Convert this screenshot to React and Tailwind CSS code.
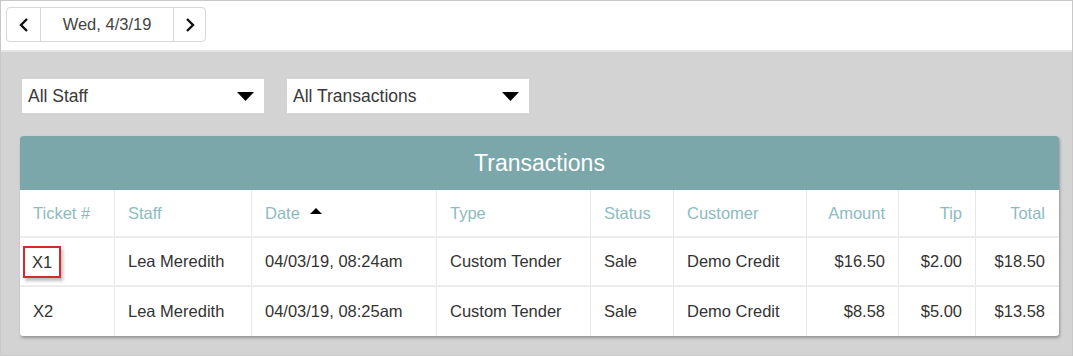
import React from "react";

const columns = [
  { key: "ticket", label: "Ticket #", width: "w-[94px]" },
  { key: "staff", label: "Staff", width: "w-[137px]" },
  { key: "date", label: "Date", width: "w-[185px]", sort: true },
  { key: "type", label: "Type", width: "w-[154px]" },
  { key: "status", label: "Status", width: "w-[83px]" },
  { key: "customer", label: "Customer", width: "w-[133px]" },
  { key: "amount", label: "Amount", width: "w-[92px]", right: true },
  { key: "tip", label: "Tip", width: "w-[77px]", right: true },
  { key: "total", label: "Total", width: "w-[83px]", right: true },
];

const rows = [
  {
    ticket: "X1",
    staff: "Lea Meredith",
    date: "04/03/19, 08:24am",
    type: "Custom Tender",
    status: "Sale",
    customer: "Demo Credit",
    amount: "$16.50",
    tip: "$2.00",
    total: "$18.50",
  },
  {
    ticket: "X2",
    staff: "Lea Meredith",
    date: "04/03/19, 08:25am",
    type: "Custom Tender",
    status: "Sale",
    customer: "Demo Credit",
    amount: "$8.58",
    tip: "$5.00",
    total: "$13.58",
  },
];

const Caret = () => (
  <svg width="17" height="9" viewBox="0 0 17 9" className="fill-black">
    <path d="M0 0 H17 L8.5 9 Z" />
  </svg>
);

const Select = ({ label }) => (
  <div className="w-[242px] h-[34px] bg-white flex items-center justify-between pl-[6px] pr-[10px] text-[17.5px] text-[#3a3a3a]">
    <span>{label}</span>
    <Caret />
  </div>
);

export default function App() {
  return (
    <div
      className="w-[1073px] h-[356px] border border-[#c8c8c8] bg-[#d3d3d3] flex flex-col overflow-hidden"
      style={{ fontFamily: '"Liberation Sans", Arial, sans-serif' }}
    >
      {/* top bar */}
      <div className="h-[51px] bg-white border-b-2 border-[#e4e4e4] flex items-start pt-[6px] pl-[5px]">
        <div className="flex h-[35px] border border-[#d8d8d8] rounded-[4px] bg-white">
          <button className="w-[34px] flex items-center justify-center border-r border-[#d8d8d8]">
            <svg width="10" height="14" viewBox="0 0 10 14" fill="none" stroke="#111" strokeWidth="2.4">
              <path d="M8 1 L2 7 L8 13" />
            </svg>
          </button>
          <div className="w-[132px] flex items-center justify-center text-[16.5px] text-[#444]">
            Wed, 4/3/19
          </div>
          <button className="w-[32px] flex items-center justify-center border-l border-[#d8d8d8]">
            <svg width="10" height="14" viewBox="0 0 10 14" fill="none" stroke="#111" strokeWidth="2.4">
              <path d="M2 1 L8 7 L2 13" />
            </svg>
          </button>
        </div>
      </div>

      {/* filters */}
      <div className="flex gap-[23px] pl-[21px] pt-[27px]">
        <Select label="All Staff" />
        <Select label="All Transactions" />
      </div>

      {/* table card */}
      <div className="ml-[19px] mt-[23px] w-[1039px] rounded-[3px] bg-white shadow-[1px_2px_3px_rgba(0,0,0,0.3)] overflow-hidden">
        <div className="h-[54px] bg-[#7ba7aa] flex items-center justify-center text-white text-[23px]">
          Transactions
        </div>
        <div className="flex h-[48px] border-b-2 border-[#ececec]">
          {columns.map((c, i) => (
            <div
              key={c.key}
              className={`${c.width} flex items-center px-[13px] text-[16.5px] text-[#8cbcbf] ${
                c.right ? "justify-end" : ""
              } ${i > 0 ? "border-l border-[#e8e8e8]" : ""}`}
            >
              {c.label}
              {c.sort && (
                <svg width="12" height="6" viewBox="0 0 12 6" className="ml-[10px] mb-[5px] fill-black">
                  <path d="M0 6 L6 0 L12 6 Z" />
                </svg>
              )}
            </div>
          ))}
        </div>
        {rows.map((r, ri) => (
          <div key={ri} className={`flex h-[49px] ${ri === 0 ? "border-b-2 border-[#ececec]" : ""}`}>
            {columns.map((c, i) => (
              <div
                key={c.key}
                className={`${c.width} flex items-center px-[13px] text-[16.5px] text-[#333] ${
                  c.right ? "justify-end" : ""
                } ${i > 0 ? "border-l border-[#e8e8e8]" : ""}`}
              >
                {c.key === "ticket" && ri === 0 ? (
                  <span className="-ml-[10px] px-[7px] py-[4px] leading-[20px] border-2 border-[#d42a2a] shadow-[2px_3px_3px_rgba(0,0,0,0.25)]">
                    {r[c.key]}
                  </span>
                ) : (
                  r[c.key]
                )}
              </div>
            ))}
          </div>
        ))}
      </div>
    </div>
  );
}
